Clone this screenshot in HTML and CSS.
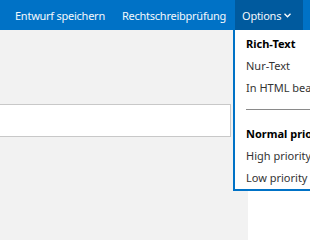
FILE: index.html
```html
<!DOCTYPE html>
<html>
<head>
  <title>Entwurf</title>
  <link rel="stylesheet" href="styles.css">
</head>
<body>
  <div class="topbar">
    <div class="nav-item first">Entwurf speichern</div>
    <div class="nav-item">Rechtschreibprüfung</div>
    <div class="nav-item active">Options
      <svg class="chev" width="7" height="5" viewBox="0 0 7 5"><path d="M0.5 0.8 L3.5 3.8 L6.5 0.8" fill="none" stroke="#fff" stroke-width="1.3"/></svg>
    </div>
    <div class="nav-item">A</div>
  </div>

  <div class="main">
    <div class="pane">
      <div class="field"></div>
    </div>
  </div>

  <div class="menu">
    <div class="menu-item bold">Rich-Text</div>
    <div class="menu-item">Nur-Text</div>
    <div class="menu-item">In HTML bearbeiten</div>
    <div class="sep"></div>
    <div class="menu-item bold">Normal priority</div>
    <div class="menu-item">High priority</div>
    <div class="menu-item">Low priority</div>
  </div>
</body>
</html>
```

FILE: styles.css
```css
body {
  margin: 0;
  font-family: "Noto Sans", "Open Sans", sans-serif;
  font-size: 11px;
  background: #fff;
  overflow: hidden;
}
.topbar {
  display: flex;
  height: 30px;
  background: #0072c6;
  color: #f4f8fc;
  white-space: nowrap;
  letter-spacing: -0.25px;
}
.nav-item {
  display: flex;
  align-items: center;
  padding: 0 9px;
}
.nav-item.first {
  padding: 0 8px 0 15px;
}
.nav-item.active {
  background: #005a9e;
  padding: 0 12px 0 7px;
}
.chev {
  margin-left: 3px;
}
.main {
  display: flex;
  height: 210px;
}
.pane {
  width: 248px;
  background: #f2f2f2;
  padding-top: 74px;
}
.field {
  width: 230px;
  height: 31px;
  background: #fff;
  border: 1px solid #c8c8c8;
  border-left: none;
}
.menu {
  position: absolute;
  left: 233px;
  top: 30px;
  width: 160px;
  background: #fff;
  border: 2px solid #0072c6;
  border-top: none;
  padding: 3px 0 0;
  color: #333;
  white-space: nowrap;
}
.menu-item {
  height: 22px;
  line-height: 22px;
  padding-left: 11px;
}
.menu-item.bold {
  font-weight: bold;
  color: #000;
}
.sep {
  height: 1px;
  background: #8a8a8a;
  margin: 10px 0 13px 11px;
}
```
